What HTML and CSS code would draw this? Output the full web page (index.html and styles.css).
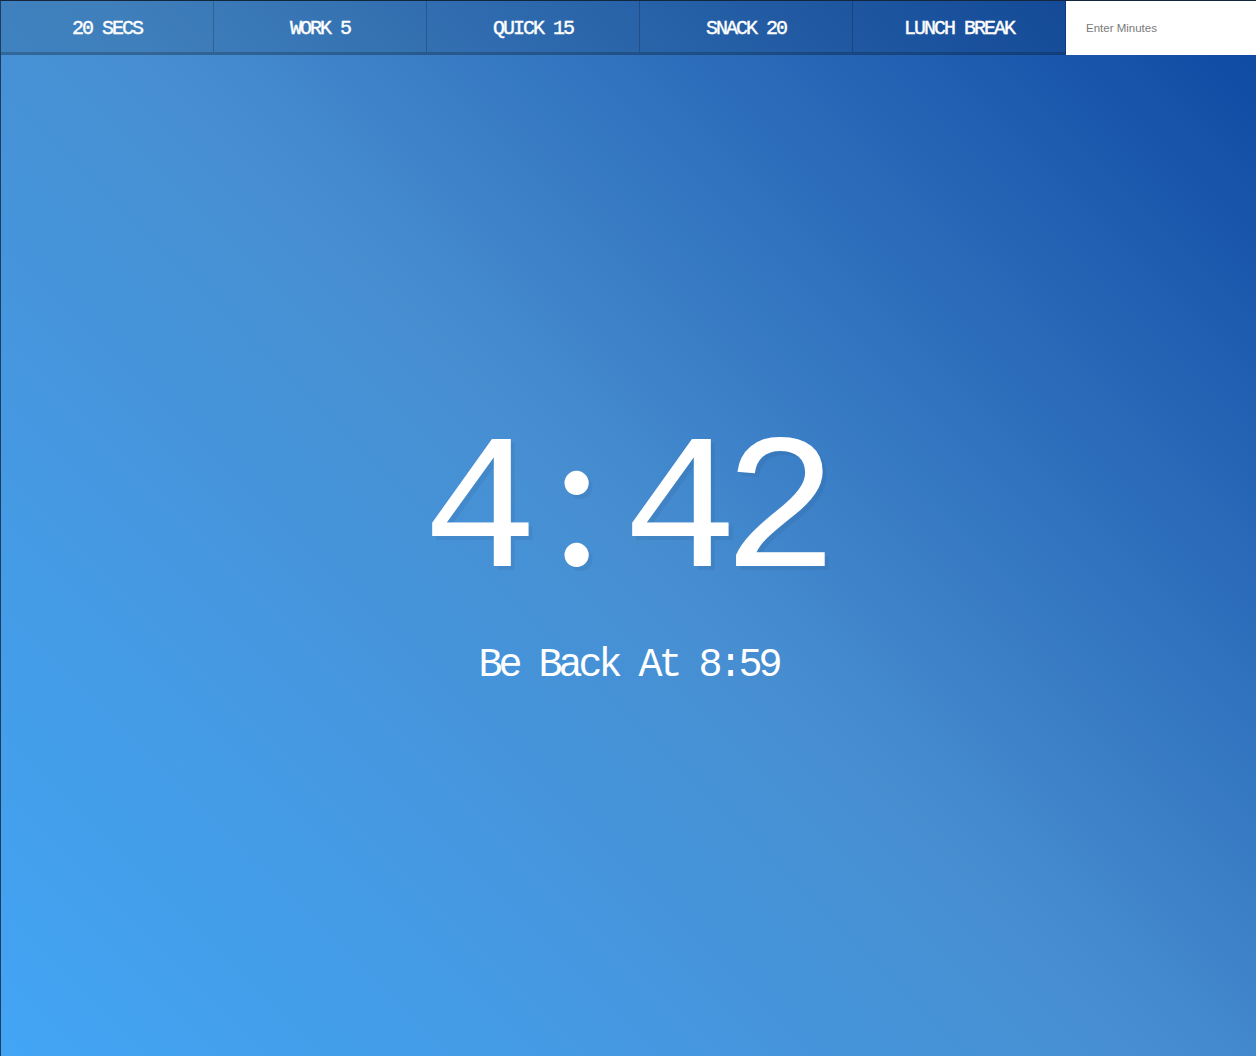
FILE: index.html
```html
<!DOCTYPE html>
<html lang="en">
<head>
<meta charset="UTF-8">
<title>Countdown Timer</title>
<link rel="stylesheet" href="styles.css">
</head>
<body>
<div class="timer">
  <div class="timer__controls">
    <button class="timer__button">20 Secs</button>
    <button class="timer__button">Work 5</button>
    <button class="timer__button">Quick 15</button>
    <button class="timer__button">Snack 20</button>
    <button class="timer__button">Lunch Break</button>
    <form class="timer__form">
      <input type="text" name="minutes" placeholder="Enter Minutes">
    </form>
  </div>
  <div class="display">
    <h1 class="display__time-left"><span class="cell">4</span><span class="cell cell--colon">:</span><span class="cell">4</span><span class="cell">2</span></h1>
    <p class="display__end-time">Be Back At 8:59</p>
  </div>
</div>
</body>
</html>
```

FILE: styles.css
```css
html {
  box-sizing: border-box;
  font-size: 10px;
  background: linear-gradient(45deg, #42a5f5 0%, #478ed1 50%, #0d47a1 100%);
  min-height: 100%;
}
*, *::before, *::after { box-sizing: inherit; }

body {
  margin: 0;
  text-align: center;
  font-family: "Liberation Mono", monospace;
  border-top: 1px solid #13263d;
  border-left: 1px solid #1d3c5e;
}

.timer {
  display: flex;
  min-height: calc(100vh - 1px);
  flex-direction: column;
}

.timer__controls {
  display: flex;
  height: 54px;
}

.timer__button {
  flex: 1;
  background: rgba(0, 0, 0, 0.1);
  border: 0;
  border-bottom: 3px solid rgba(0, 0, 0, 0.2);
  border-right: 1px solid rgba(0, 0, 0, 0.2);
  color: #fff;
  font-family: "Liberation Mono", monospace;
  font-weight: normal;
  -webkit-text-stroke: 0.4px #fff;
  font-size: 2rem;
  letter-spacing: -2px;
  text-transform: uppercase;
  padding: 3px 0 0;
  cursor: pointer;
}

.timer__form {
  flex: 0 0 190px;
  width: 190px;
  display: flex;
}

.timer__form input {
  flex: 1;
  width: 0;
  min-width: 0;
  border: 0;
  padding: 0 20px;
  font-family: "Liberation Sans", Arial, sans-serif;
  font-size: 11.5px;
  background: #fff;
}
.timer__form input::placeholder { color: #7a7a7a; }

.display {
  flex: 1;
  display: flex;
  flex-direction: column;
  align-items: center;
  justify-content: center;
  padding-bottom: 14px;
}

.display__time-left {
  font-weight: normal;
  font-size: 193px;
  line-height: 1.1;
  margin: 0 0 0 -12px;
  color: #fff;
  text-shadow: 4px 4px 0 rgba(0, 0, 0, 0.05);
  display: flex;
  align-items: baseline;
}

.cell {
  display: inline-block;
  width: 100px;
  text-align: center;
  letter-spacing: -16px;
}

.cell--colon {
  font-family: Lato, "Liberation Sans", sans-serif;
  line-height: 0.85;
  margin-left: -4px;
  margin-right: 4px;
}

.display__end-time {
  font-size: 4rem;
  letter-spacing: -4px;
  margin: 21px 0 0;
  color: #fff;
}
```
